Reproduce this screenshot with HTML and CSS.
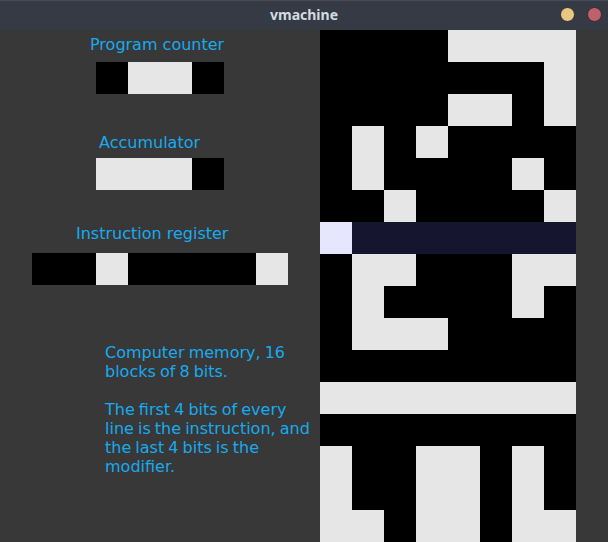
FILE: index.html
```html
<!DOCTYPE html>
<html>
<head>
<meta charset="utf-8">
<title>vmachine</title>
<link rel="stylesheet" href="styles.css">
</head>
<body>
<div class="window">
  <div class="titlebar">
    <span class="title">vmachine</span>
    <div class="controls">
      <span class="dot min"></span>
      <span class="dot close"></span>
    </div>
  </div>
  <div class="main">
    <div class="left">
      <div class="label l-pc">Program counter</div>
      <div class="reg r-pc"><span class="b0"></span><span class="b1"></span><span class="b1"></span><span class="b0"></span></div>
      <div class="label l-acc">Accumulator</div>
      <div class="reg r-acc"><span class="b1"></span><span class="b1"></span><span class="b1"></span><span class="b0"></span></div>
      <div class="label l-ir">Instruction register</div>
      <div class="reg r-ir"><span class="b0"></span><span class="b0"></span><span class="b1"></span><span class="b0"></span><span class="b0"></span><span class="b0"></span><span class="b0"></span><span class="b1"></span></div>
      <p class="info">Computer memory, 16<br>blocks of 8 bits.<br><br>The first 4 bits of every<br>line is the instruction, and<br>the last 4 bits is the<br>modifier.</p>
    </div>
    <div class="memory">
      <div class="row"><span class="b0"></span><span class="b0"></span><span class="b0"></span><span class="b0"></span><span class="b1"></span><span class="b1"></span><span class="b1"></span><span class="b1"></span></div>
      <div class="row"><span class="b0"></span><span class="b0"></span><span class="b0"></span><span class="b0"></span><span class="b0"></span><span class="b0"></span><span class="b0"></span><span class="b1"></span></div>
      <div class="row"><span class="b0"></span><span class="b0"></span><span class="b0"></span><span class="b0"></span><span class="b1"></span><span class="b1"></span><span class="b0"></span><span class="b1"></span></div>
      <div class="row"><span class="b0"></span><span class="b1"></span><span class="b0"></span><span class="b1"></span><span class="b0"></span><span class="b0"></span><span class="b0"></span><span class="b0"></span></div>
      <div class="row"><span class="b0"></span><span class="b1"></span><span class="b0"></span><span class="b0"></span><span class="b0"></span><span class="b0"></span><span class="b1"></span><span class="b0"></span></div>
      <div class="row"><span class="b0"></span><span class="b0"></span><span class="b1"></span><span class="b0"></span><span class="b0"></span><span class="b0"></span><span class="b0"></span><span class="b1"></span></div>
      <div class="row hl"><span class="b1"></span><span class="b0"></span><span class="b0"></span><span class="b0"></span><span class="b0"></span><span class="b0"></span><span class="b0"></span><span class="b0"></span></div>
      <div class="row"><span class="b0"></span><span class="b1"></span><span class="b1"></span><span class="b0"></span><span class="b0"></span><span class="b0"></span><span class="b1"></span><span class="b1"></span></div>
      <div class="row"><span class="b0"></span><span class="b1"></span><span class="b0"></span><span class="b0"></span><span class="b0"></span><span class="b0"></span><span class="b1"></span><span class="b0"></span></div>
      <div class="row"><span class="b0"></span><span class="b1"></span><span class="b1"></span><span class="b1"></span><span class="b0"></span><span class="b0"></span><span class="b0"></span><span class="b0"></span></div>
      <div class="row"><span class="b0"></span><span class="b0"></span><span class="b0"></span><span class="b0"></span><span class="b0"></span><span class="b0"></span><span class="b0"></span><span class="b0"></span></div>
      <div class="row"><span class="b1"></span><span class="b1"></span><span class="b1"></span><span class="b1"></span><span class="b1"></span><span class="b1"></span><span class="b1"></span><span class="b1"></span></div>
      <div class="row"><span class="b0"></span><span class="b0"></span><span class="b0"></span><span class="b0"></span><span class="b0"></span><span class="b0"></span><span class="b0"></span><span class="b0"></span></div>
      <div class="row"><span class="b1"></span><span class="b0"></span><span class="b0"></span><span class="b1"></span><span class="b1"></span><span class="b0"></span><span class="b1"></span><span class="b0"></span></div>
      <div class="row"><span class="b1"></span><span class="b0"></span><span class="b0"></span><span class="b1"></span><span class="b1"></span><span class="b0"></span><span class="b1"></span><span class="b0"></span></div>
      <div class="row"><span class="b1"></span><span class="b1"></span><span class="b0"></span><span class="b1"></span><span class="b1"></span><span class="b0"></span><span class="b1"></span><span class="b1"></span></div>
    </div>
  </div>
</div>
</body>
</html>
```

FILE: styles.css
```css
html, body {
  margin: 0;
  padding: 0;
  background: #383838;
  overflow: hidden;
}
.window {
  width: 608px;
  height: 542px;
  display: flex;
  flex-direction: column;
}
.titlebar {
  height: 30px;
  flex: 0 0 30px;
  background: #353a45;
  border-top: 1px solid #454b57;
  box-sizing: border-box;
  display: flex;
  align-items: center;
  justify-content: center;
  position: relative;
}
.title {
  font-family: "Noto Sans", "DejaVu Sans", sans-serif;
  font-weight: 700;
  font-size: 14px;
  color: #d3dae3;
  margin-top: -2px;
}
.controls {
  position: absolute;
  right: 6px;
  top: 6px;
  display: flex;
  gap: 12px;
}
.dot {
  width: 15px;
  height: 15px;
  border-radius: 50%;
  box-sizing: border-box;
  border: 1px solid #2a2e36;
}
.dot.min { background: #e8c783; }
.dot.close { background: #c0606a; }
.main {
  flex: 1;
  display: flex;
}
.left {
  width: 320px;
  flex: 0 0 320px;
  font-family: "DejaVu Sans", sans-serif;
  font-size: 16px;
  line-height: 19px;
  color: #17aaee;
}
.label {
  height: 19px;
  white-space: nowrap;
}
.l-pc { margin-top: 5px; padding-left: 90px; }
.l-acc { margin-top: 39px; padding-left: 99px; }
.l-ir { margin-top: 34px; padding-left: 76px; }
.reg {
  display: flex;
  height: 32px;
}
.r-pc { margin-top: 8px; margin-left: 96px; }
.r-acc { margin-top: 6px; margin-left: 96px; }
.r-ir { margin-top: 10px; margin-left: 32px; }
.reg span, .row span {
  width: 32px;
  height: 32px;
  flex: 0 0 32px;
}
.b0 { background: #000; }
.b1 { background: #e6e6e6; }
.info {
  margin: 58px 0 0 105px;
  white-space: nowrap;
  word-spacing: -1px;
}
.memory {
  width: 256px;
  display: flex;
  flex-direction: column;
}
.row {
  display: flex;
  height: 32px;
}
.row.hl .b0 { background: #151530; }
.row.hl .b1 { background: #e6e6ff; }
```
